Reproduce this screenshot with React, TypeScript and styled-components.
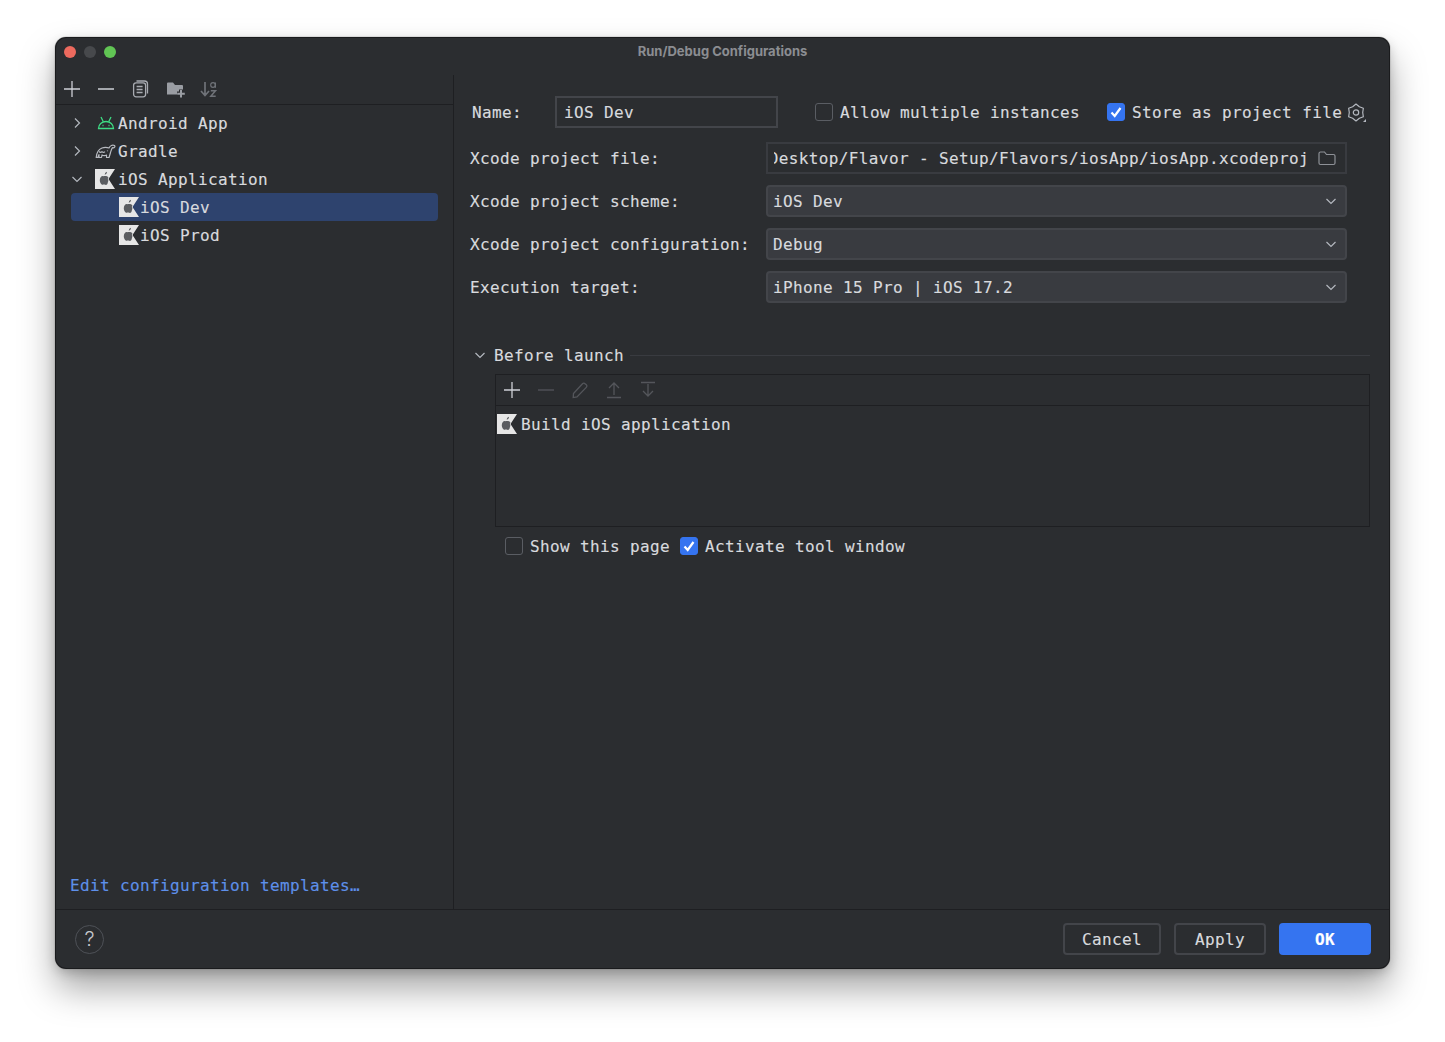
import React from "react";
import styled, { createGlobalStyle } from "styled-components";

const Global = createGlobalStyle`
  html, body { margin: 0; padding: 0; background: #fff; }
  * { box-sizing: border-box; }
`;
const mono = `"DejaVu Sans Mono", "Liberation Mono", monospace`;

const Page = styled.div`
  width: 1445px; height: 1042px; padding: 38px 56px 74px 56px; background: #fff; overflow: hidden;
`;
const Win = styled.div`
  width: 1333px; height: 930px; background: #2b2d30; border-radius: 10px; display: flex; flex-direction: column;
  box-shadow: 0 0 0 1px #1a1b1d, 0 0 0 1.5px rgba(120,120,120,.35), 0 20px 36px rgba(0,0,0,.36), 0 4px 12px rgba(0,0,0,.2);
  font: 400 16px/22px ${mono}; letter-spacing: .37px; color: #d8dade; -webkit-text-stroke: .15px currentColor; overflow: hidden;
`;
const Txt = styled.span`display: block; padding-top: 2px; white-space: pre;`;
const TitleBar = styled.div`
  height: 37px; flex: none; display: flex; align-items: center; position: relative; justify-content: center; padding-bottom: 12px;
`;
const Lights = styled.div`
  position: absolute; left: 8px; top: 8px; display: flex; gap: 8px;
`;
const Light = styled.span<{ $c: string }>`
  width: 12px; height: 12px; border-radius: 50%; background: ${p => p.$c};
`;
const Title = styled.div`
  font: 700 13px/16px Inter, "Liberation Sans", sans-serif; letter-spacing: 0; color: #8b8d92; -webkit-text-stroke: 0;
`;
const Main = styled.div`flex: 1; display: flex; min-height: 0;`;
const Side = styled.div`
  width: 398px; flex: none; border-right: 1px solid #1e1f22; display: flex; flex-direction: column;
`;
const SideBar = styled.div`
  height: 30px; flex: none; border-bottom: 1px solid #1e1f22; display: flex; align-items: center; gap: 14px; padding: 0 0 1px 6px;
`;
const Tree = styled.div`flex: 1; padding: 4px 15px 0 15px;`;
const Row = styled.div<{ $sel?: boolean; $depth?: number }>`
  height: 28px; display: flex; align-items: center; border-radius: 4px;
  padding-left: ${p => (p.$depth ? 48 : 0)}px; background: ${p => (p.$sel ? "#2e436e" : "transparent")};
`;
const Chev = styled.span`width: 24px; flex: none; display: flex; margin-left: -2px; margin-right: 2px;`;
const TreeIcon = styled.span`width: 23px; flex: none; display: flex; justify-content: flex-start;`;
const AndroidSlot = styled(TreeIcon)`padding-left: 2px;`;
const SmallIcon = styled.span`width: 21px; flex: none; display: flex;`;
const TemplateLink = styled.div`
  color: #5e90ea; padding: 0 0 12px 14px;
`;
const Content = styled.div`flex: 1; padding: 21px 19px 0 16px; min-width: 0;`;
const NameRow = styled.div`display: flex; align-items: center; height: 32px;`;
const NameLabel = styled.label`width: 85px; padding: 2px 0 0 2px; flex: none;`;
const NameField = styled.div`
  width: 223px; height: 32px; flex: none; border: 2px solid #43454a; background: #2b2d30; padding: 0 7px; display: flex; align-items: center;
`;
const Check = styled.span<{ $on?: boolean }>`
  width: 18px; height: 18px; flex: none; border-radius: 3px; display: flex; align-items: center; justify-content: center;
  background: ${p => (p.$on ? "#3574f0" : "transparent")};
  border: 1px solid ${p => (p.$on ? "#3574f0" : "#5a5d63")};
`;
const CheckItem = styled.div<{ $ml?: number }>`
  display: flex; align-items: center; gap: 7px; margin-left: ${p => p.$ml ?? 0}px;
`;
const GearSlot = styled.span`margin-left: 4px; display: flex;`;
const Form = styled.div`
  display: grid; grid-template-columns: 296px 581px; row-gap: 11px; margin-top: 14px; align-items: center;
`;
const FormLabel = styled.label`padding-top: 2px;`;
const PathField = styled.div`
  height: 32px; border: 2px solid #393b40; display: flex; align-items: center; padding: 0 9px 0 6px; gap: 9px; min-width: 0;
`;
const PathClip = styled.div`
  flex: 1; min-width: 0; overflow: hidden; display: flex; justify-content: flex-end; white-space: nowrap; padding-top: 2px;
`;
const Combo = styled.div`
  height: 32px; border: 2px solid #43454a; background: #393b40; border-radius: 4px; display: flex; align-items: center; justify-content: space-between; padding: 0 6px 0 5px;
`;
const SectionHead = styled.div`
  display: flex; align-items: center; height: 20px; margin-top: 42px; padding-left: 2px;
`;
const HeadChev = styled.span`width: 22px; flex: none; display: flex;`;
const HeadLine = styled.span`flex: 1; height: 1px; background: #393b40; margin-left: 6px;`;
const Box = styled.div`
  margin: 9px 0 0 25px; height: 153px; border: 1px solid #1e1f22;
`;
const BoxBar = styled.div`
  height: 31px; border-bottom: 1px solid #1e1f22; display: flex; align-items: center; gap: 14px; padding-left: 6px;
`;
const BoxRow = styled.div`display: flex; align-items: center; gap: 4px; height: 28px; margin-top: 4px; padding-left: 1px;`;
const BelowRow = styled.div`display: flex; align-items: center; margin: 10px 0 0 35px; height: 18px;`;
const Footer = styled.div`
  height: 59px; flex: none; border-top: 1px solid #1e1f22; display: flex; align-items: center; padding: 0 18px 0 19px; gap: 13px;
`;
const Help = styled.div`
  width: 29px; height: 29px; border-radius: 50%; border: 1px solid #4e5157; display: flex; align-items: center; justify-content: center;
  font: 300 20px/1 Inter, "Liberation Sans", sans-serif; letter-spacing: 0; -webkit-text-stroke: 0; color: #c4c6cc; margin-right: auto;
`;
const Btn = styled.div<{ $w: number; $primary?: boolean }>`
  width: ${p => p.$w}px; height: 32px; border-radius: 4px; display: flex; align-items: center; justify-content: center;
  border: 2px solid ${p => (p.$primary ? "#3574f0" : "#43454a")};
  background: ${p => (p.$primary ? "#3574f0" : "transparent")};
  color: ${p => (p.$primary ? "#fff" : "#d8dade")};
  font-weight: ${p => (p.$primary ? 700 : 400)};
`;

const Svg = styled.svg`display: block; flex: none;`;

const ChevR = () => (
  <Svg width="16" height="16" viewBox="0 0 16 16" fill="none" stroke="#b4b8bf" strokeWidth="1.2"><path d="M6 3.500 10.500 8 6 12.500" /></Svg>
);
const ChevD = ({ c = "#b4b8bf" }: { c?: string }) => (
  <Svg width="16" height="16" viewBox="0 0 16 16" fill="none" stroke={c} strokeWidth="1.2"><path d="M3.500 6 8 10.500 12.500 6" /></Svg>
);
const Plus = () => (
  <Svg width="20" height="18" viewBox="-1 0 20 18" fill="none" stroke="#ced0d6" strokeWidth="1.3"><path d="M9 1v16M1 9h16" /></Svg>
);
const Minus = ({ c = "#ced0d6" }: { c?: string }) => (
  <Svg width="20" height="18" viewBox="0 0 20 18" fill="none" stroke={c} strokeWidth="1.3"><path d="M2 9h16" /></Svg>
);
const Copy = () => (
  <Svg width="20" height="18" viewBox="-1 0 20 18" fill="none" stroke="#a8abb1" strokeWidth="1.3">
    <rect x="2.600" y="2.800" width="12" height="14" rx="2.500" />
    <path d="M5.500 1h8a3 3 0 0 1 3 3v9.500" />
    <path d="M5.600 6.500h6M5.600 9.500h6M5.600 12.500h6" />
  </Svg>
);
const FolderPlus = () => (
  <Svg width="20" height="18" viewBox="-2 0 20 18" overflow="visible">
    <path d="M1 3.500a1 1 0 0 1 1-1h5l2 2.400h7a1 1 0 0 1 1 1V14.500H1z" fill="#9a9da3" />
    <path d="M15 9.500v8M11 13.500h8" stroke="#2b2d30" strokeWidth="4" />
    <path d="M15 10v7.500M11.200 13.700h7.600" stroke="#9a9da3" strokeWidth="2" />
  </Svg>
);
const SortAz = () => (
  <Svg width="20" height="18" viewBox="-1 0 20 18" fill="none" stroke="#6f7278">
    <path d="M6 2v13M2 11l4 4.500 4-4.500" strokeWidth="1.700" />
    <circle cx="14" cy="5" r="2.300" strokeWidth="1.200" />
    <path d="M16.400 2.500V7.700" strokeWidth="1.200" />
    <path d="M11.800 10.800h4.700l-4.700 5.500h4.900" strokeWidth="1.500" />
  </Svg>
);
const Pencil = () => (
  <Svg width="20" height="18" viewBox="0 0 20 18" fill="none" stroke="#54565b" strokeWidth="1.300">
    <path d="M3.500 12.500 12.500 2.700a1.800 1.800 0 0 1 2.600 0l1.200 1.100a1.800 1.800 0 0 1 0 2.600L7 16l-3.800.6z" />
  </Svg>
);
const Up = () => (
  <Svg width="20" height="18" viewBox="0 0 20 18" fill="none" stroke="#54565b" strokeWidth="1.300">
    <path d="M10 14V2M5 7l5-5 5 5M3 16.500h14" />
  </Svg>
);
const Down = () => (
  <Svg width="20" height="18" viewBox="0 0 20 18" fill="none" stroke="#54565b" strokeWidth="1.300">
    <path d="M10 3v12M5 10l5 5 5-5M3 1.500h14" />
  </Svg>
);
const Android = () => (
  <Svg width="18" height="16" viewBox="0 0 18 16" fill="none" stroke="#3ddc84" strokeWidth="1.300">
    <path d="M1.500 13.500h15a7.500 7 0 0 0-15 0z" />
    <path d="M4 2l2.200 4.500M14 2l-2.200 4.500" />
    <path d="M5.500 10.500h1M11.500 10.500h1" />
  </Svg>
);
const Gradle = () => (
  <Svg width="21" height="16" viewBox="0 0 21 16" fill="none" stroke="#b8bbc1" strokeWidth="1.200" strokeLinejoin="round">
    <path d="M1.200 14.500C1.500 10 3.500 6.500 7 5c3-1.200 5-.8 7 0 1-2.500 3.500-3.500 5.500-2.500 1 1 0 2.700-2 2.200-1 1.300-1.500 3.300-2 4.800-.5 2-1 3.500-1.500 5h-2.500V12c-1.500.8-3 .8-4.500 0l-.5 2.500H4V11.500l-1.200 3z" />
    <path d="M4 8.500c1 1 2 1 3 .2 1 1 2 1 3 0M12.500 7.500v.8" />
  </Svg>
);
const Xcode = () => (
  <Svg width="20" height="20" viewBox="0 0 20 20">
    <path d="M0 0H20L13.500 10 20 20H0z" fill="#e6e6e6" />
    <path d="M8.500 7.200c1.400-.5 2.500-.3 3.500.1l1.400 1-.6 1.700.6 1.500-1 3.500c-.7.800-1.400 1.100-2.200.8-.9-.3-1.700-.3-2.500 0C6.200 16 4.800 13.200 4.800 11.300c0-3 2-4.900 3.700-4.100z" fill="#5a5c60" />
    <path d="M9.700 5.800c.1-1.600 1-2.600 2.300-3 0 1.600-.8 2.600-2.300 3z" fill="#5a5c60" />
  </Svg>
);
const Tick = () => (
  <Svg width="14" height="14" viewBox="0 0 14 14" fill="none" stroke="#fff" strokeWidth="2.200"><path d="M2.500 7.500 5.700 11 11.500 3" /></Svg>
);
const Gear = () => (
  <Svg width="20" height="21" viewBox="0 0 20 21" fill="none" stroke="#b4b8bf" strokeWidth="1.200" strokeLinejoin="round">
    <path d="M10 2l3.350 2.700 4 1.550-.65 4.250.65 4.250-4 1.550L10 19l-3.350-2.700-4-1.550.65-4.250-.65-4.250 4-1.550z" />
    <circle cx="10" cy="10.500" r="2.700" />
    <path d="M17 20h3v-3z" fill="#b4b8bf" stroke="none" />
  </Svg>
);
const Folder = () => (
  <Svg width="18" height="16" viewBox="0 0 18 16" fill="none" stroke="#8e9197" strokeWidth="1.200">
    <path d="M1 3.500A1.500 1.500 0 0 1 2.500 2h4l2 2.500h7A1.500 1.500 0 0 1 17 6v7a1.500 1.500 0 0 1-1.500 1.500h-13A1.500 1.500 0 0 1 1 13z" />
  </Svg>
);

export default function App() {
  return (
    <Page>
      <Global />
      <Win>
        <TitleBar>
          <Lights>
            <Light $c="#ed6a5e" />
            <Light $c="#47494c" />
            <Light $c="#61c554" />
          </Lights>
          <Title>Run/Debug Configurations</Title>
        </TitleBar>
        <Main>
          <Side>
            <SideBar>
              <Plus />
              <Minus />
              <Copy />
              <FolderPlus />
              <SortAz />
            </SideBar>
            <Tree>
              <Row>
                <Chev><ChevR /></Chev>
                <AndroidSlot><Android /></AndroidSlot>
                <Txt>Android App</Txt>
              </Row>
              <Row>
                <Chev><ChevR /></Chev>
                <TreeIcon><Gradle /></TreeIcon>
                <Txt>Gradle</Txt>
              </Row>
              <Row>
                <Chev><ChevD /></Chev>
                <TreeIcon><Xcode /></TreeIcon>
                <Txt>iOS Application</Txt>
              </Row>
              <Row $sel $depth={1}>
                <SmallIcon><Xcode /></SmallIcon>
                <Txt>iOS Dev</Txt>
              </Row>
              <Row $depth={1}>
                <SmallIcon><Xcode /></SmallIcon>
                <Txt>iOS Prod</Txt>
              </Row>
            </Tree>
            <TemplateLink>Edit configuration templates…</TemplateLink>
          </Side>
          <Content>
            <NameRow>
              <NameLabel>Name:</NameLabel>
              <NameField><Txt>iOS Dev</Txt></NameField>
              <CheckItem $ml={37}><Check /><Txt>Allow multiple instances</Txt></CheckItem>
              <CheckItem $ml={27}><Check $on><Tick /></Check><Txt>Store as project file</Txt></CheckItem>
              <GearSlot><Gear /></GearSlot>
            </NameRow>
            <Form>
              <FormLabel>Xcode project file:</FormLabel>
              <PathField>
                <PathClip>Desktop/Flavor - Setup/Flavors/iosApp/iosApp.xcodeproj</PathClip>
                <Folder />
              </PathField>
              <FormLabel>Xcode project scheme:</FormLabel>
              <Combo><Txt>iOS Dev</Txt><ChevD /></Combo>
              <FormLabel>Xcode project configuration:</FormLabel>
              <Combo><Txt>Debug</Txt><ChevD /></Combo>
              <FormLabel>Execution target:</FormLabel>
              <Combo><Txt>iPhone 15 Pro | iOS 17.2</Txt><ChevD /></Combo>
            </Form>
            <SectionHead>
              <HeadChev><ChevD /></HeadChev>
              <Txt>Before launch</Txt>
              <HeadLine />
            </SectionHead>
            <Box>
              <BoxBar>
                <Plus />
                <Minus c="#54565b" />
                <Pencil />
                <Up />
                <Down />
              </BoxBar>
              <BoxRow><Xcode /><Txt>Build iOS application</Txt></BoxRow>
            </Box>
            <BelowRow>
              <CheckItem><Check /><Txt>Show this page</Txt></CheckItem>
              <CheckItem $ml={10}><Check $on><Tick /></Check><Txt>Activate tool window</Txt></CheckItem>
            </BelowRow>
          </Content>
        </Main>
        <Footer>
          <Help>?</Help>
          <Btn $w={98}><Txt>Cancel</Txt></Btn>
          <Btn $w={92}><Txt>Apply</Txt></Btn>
          <Btn $w={92} $primary><Txt>OK</Txt></Btn>
        </Footer>
      </Win>
    </Page>
  );
}
